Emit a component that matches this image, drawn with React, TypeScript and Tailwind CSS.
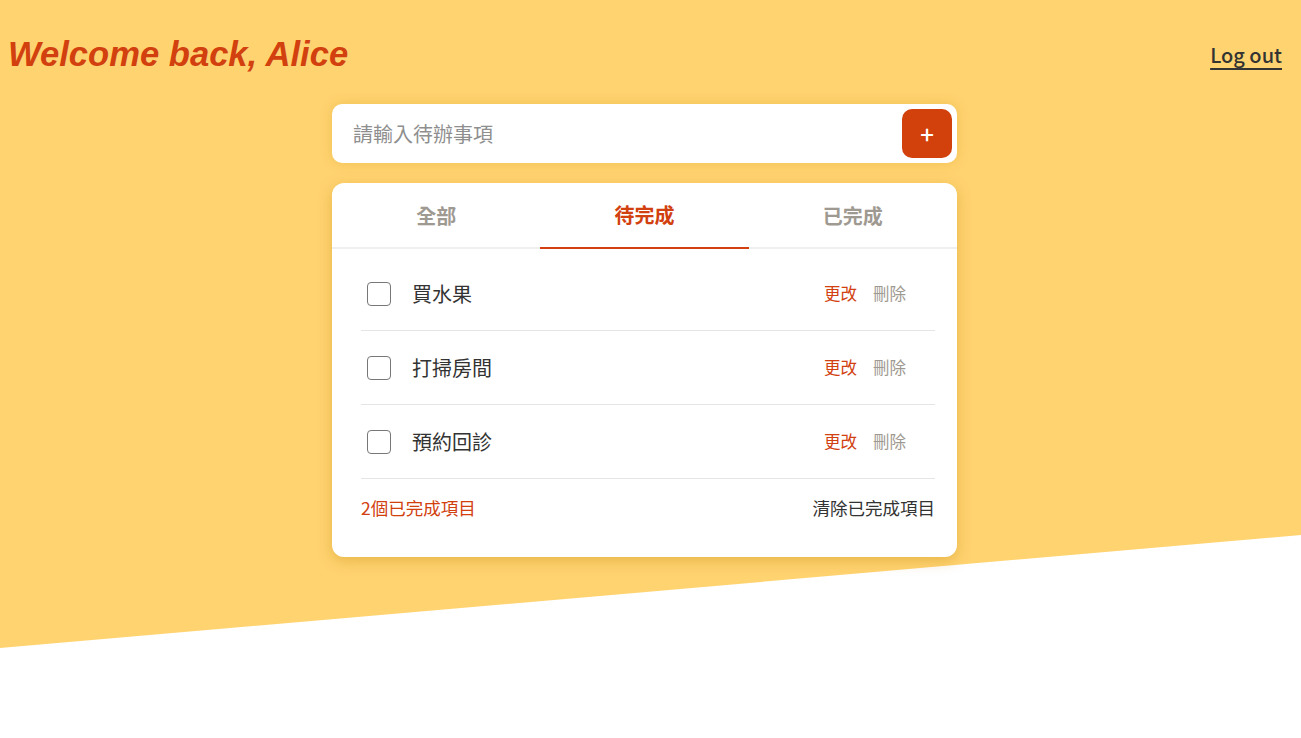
const cjk = { fontFamily: '"Noto Sans CJK TC", "Noto Sans", sans-serif' };

const todos = ['買水果', '打掃房間', '預約回診'];
const tabs = ['全部', '待完成', '已完成'];

export default function App() {
  return (
    <div className="relative min-h-screen bg-white overflow-hidden" style={cjk}>
      {/* slanted yellow backdrop */}
      <div className="absolute inset-x-0 top-0 h-[738px] bg-[#FFD370] [clip-path:polygon(0_0,100%_0,100%_535px,0_648px)]" />

      <div className="relative">
        <header className="flex items-center justify-between mt-[32px] h-[46px] pl-2 pr-[19px]">
          <h1
            className="text-[34.6px] font-bold italic text-[#D1400E]"
            style={{ fontFamily: '"Liberation Sans", Arial, sans-serif' }}
          >
            Welcome back, Alice
          </h1>
          <a
            href="#"
            className="text-[20px] font-medium text-[#333] underline decoration-2 underline-offset-[5px] [text-decoration-skip-ink:none] leading-none"
          >
            Log out
          </a>
        </header>

        <div className="pr-3">
          <main className="mx-auto w-[625px] mt-[26px]">
            <div className="flex items-center h-[59px] bg-white rounded-[10px] pl-[21px] pr-[5px] shadow-[0_0_12px_rgba(200,140,0,0.25)]">
              <input
                className="flex-1 text-[20px] text-[#333] placeholder:text-[#8e8e8e] outline-none bg-transparent"
                placeholder="請輸入待辦事項"
              />
              <button className="w-[50px] h-[49px] rounded-[10px] bg-[#D2400C] text-white text-[24px] leading-none font-medium flex items-center justify-center">
                +
              </button>
            </div>

            <section className="mt-[20px] bg-white rounded-[12px] shadow-[0_4px_14px_rgba(190,130,0,0.35)]">
              <nav className="flex border-b-2 border-[#efefef]">
                {tabs.map((t, i) => (
                  <div
                    key={t}
                    className={
                      i === 1
                        ? 'flex-1 h-[66px] -mb-[2px] flex items-center justify-center text-[20px] font-bold text-[#D1400E] border-b-2 border-[#D1400E]'
                        : 'flex-1 h-[66px] -mb-[2px] flex items-center justify-center text-[20px] font-bold text-[#9f9a91]'
                    }
                  >
                    {t}
                  </div>
                ))}
              </nav>

              <div className="pl-[29px] pr-[22px] pt-[8px]">
                {todos.map((t) => (
                  <div key={t} className="flex items-center h-[74px] border-b border-[#e5e5e5]">
                    <span className="ml-[6px] w-[24px] h-[24px] rounded-[4px] border border-[#777]" />
                    <span className="ml-[21px] text-[20px] text-[#333]">{t}</span>
                    <div className="ml-auto mr-[29px] flex gap-4 text-[16.5px]">
                      <span className="text-[#D1400E]">更改</span>
                      <span className="text-[#9f9a91]">刪除</span>
                    </div>
                  </div>
                ))}
                <div className="flex justify-between pt-[17px] pb-[37px] text-[17.5px] leading-6">
                  <span className="text-[#D1400E]">2個已完成項目</span>
                  <span className="text-[#333]">清除已完成項目</span>
                </div>
              </div>
            </section>
          </main>
        </div>
      </div>
    </div>
  );
}
